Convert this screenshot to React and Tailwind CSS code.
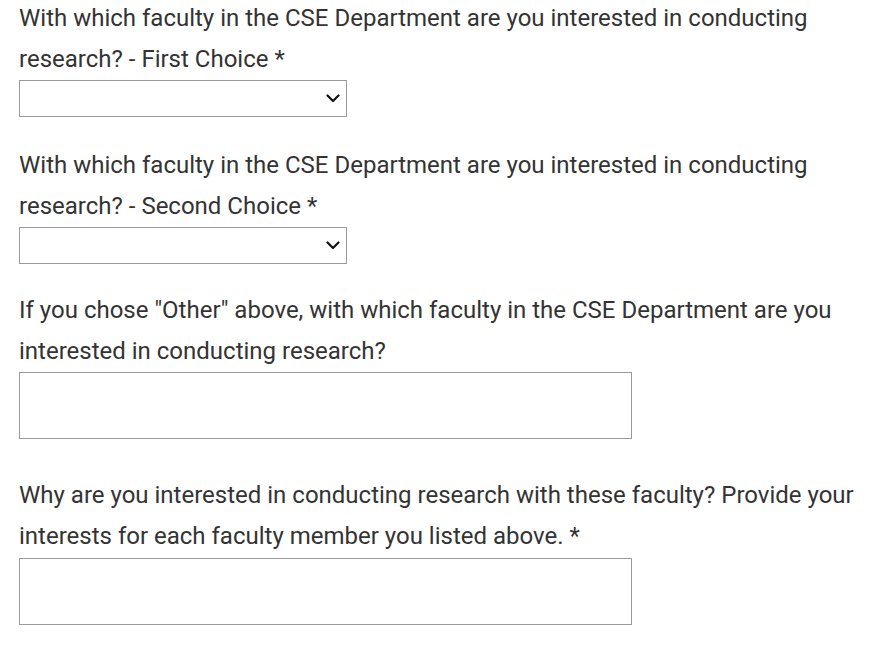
function Chevron() {
  return (
    <svg width="14" height="9" viewBox="0 0 14 9" fill="none">
      <path d="M1.5 1.5 L7 7 L12.5 1.5" stroke="#111" strokeWidth="2.2" strokeLinecap="round" strokeLinejoin="round" />
    </svg>
  )
}

function SelectBox() {
  return (
    <div className="w-[328px] h-[37px] border border-[#9a9a9a] bg-white flex items-center justify-end pr-[6px]">
      <Chevron />
    </div>
  )
}

function TextBox() {
  return <div className="w-[613px] h-[67px] border border-[#9a9a9a] bg-white" />
}

function Label({ children }) {
  return <p className="text-[24px] leading-[41px] text-[#333]">{children}</p>
}

export default function App() {
  return (
    <div className="min-h-[647px] bg-white pl-[19px] pr-[12px] font-['Roboto',_'Liberation_Sans',_sans-serif]">
      <div className="-mt-[2px]">
        <Label>With which faculty in the CSE Department are you interested in conducting research? - First Choice *</Label>
        <SelectBox />
      </div>

      <div className="mt-[28px]">
        <Label>With which faculty in the CSE Department are you interested in conducting research? - Second Choice *</Label>
        <SelectBox />
      </div>

      <div className="mt-[26px]">
        <Label>If you chose "Other" above, with which faculty in the CSE Department are you interested in conducting research?</Label>
        <TextBox />
      </div>

      <div className="mt-[36px]">
        <Label>Why are you interested in conducting research with these faculty? Provide your interests for each faculty member you listed above. *</Label>
        <div className="mt-px">
          <TextBox />
        </div>
      </div>
    </div>
  )
}
